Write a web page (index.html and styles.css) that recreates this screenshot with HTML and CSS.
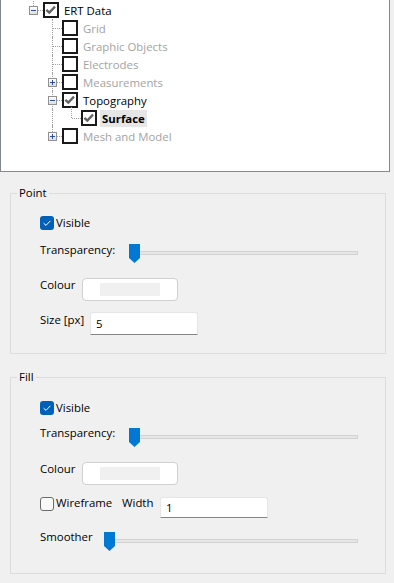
FILE: index.html
```html
<!DOCTYPE html>
<html lang="en">
<head>
    <meta charset="UTF-8">
    <meta name="viewport" content="width=device-width, initial-scale=1.0">
    <title>Surface properties</title>
    <link rel="stylesheet" href="styles.css">
</head>
<body>
    <!-- Layer tree -->
    <div class="tree">
        <div class="row">
            <span class="ind top h"><span class="exp"></span></span>
            <span class="tcb"><svg viewBox="0 0 12 12"><path d="M1.4 5.8 L4.3 8.6 L10 2.6"/></svg></span>
            <span class="tlabel">ERT Data</span>
        </div>
        <div class="row">
            <span class="ind"></span>
            <span class="ind v h"></span>
            <span class="tcb"></span>
            <span class="tlabel dis">Grid</span>
        </div>
        <div class="row">
            <span class="ind"></span>
            <span class="ind v h"></span>
            <span class="tcb"></span>
            <span class="tlabel dis">Graphic Objects</span>
        </div>
        <div class="row">
            <span class="ind"></span>
            <span class="ind v h"></span>
            <span class="tcb"></span>
            <span class="tlabel dis">Electrodes</span>
        </div>
        <div class="row">
            <span class="ind"></span>
            <span class="ind v h"><span class="exp plus"></span></span>
            <span class="tcb"></span>
            <span class="tlabel dis">Measurements</span>
        </div>
        <div class="row">
            <span class="ind"></span>
            <span class="ind v h"><span class="exp"></span></span>
            <span class="tcb"><svg viewBox="0 0 12 12"><path d="M1.4 5.8 L4.3 8.6 L10 2.6"/></svg></span>
            <span class="tlabel">Topography</span>
        </div>
        <div class="row">
            <span class="ind"></span>
            <span class="ind v"></span>
            <span class="ind top h"></span>
            <span class="tcb"><svg viewBox="0 0 12 12"><path d="M1.4 5.8 L4.3 8.6 L10 2.6"/></svg></span>
            <span class="tlabel sel">Surface</span>
        </div>
        <div class="row">
            <span class="ind"></span>
            <span class="ind top h"><span class="exp plus"></span></span>
            <span class="tcb"></span>
            <span class="tlabel dis">Mesh and Model</span>
        </div>
    </div>

    <!-- Point properties -->
    <fieldset class="group point">
        <legend>Point</legend>
        <div class="frow visible">
            <span class="cb on"><svg viewBox="0 0 14 14"><path d="M3.6 7.2 L6 9.4 L10.4 4.8"/></svg></span>
            <span class="cb-label">Visible</span>
        </div>
        <div class="frow trans">
            <span class="lbl w-trans">Transparency:</span>
            <div class="slider"><div class="track"></div><svg class="thumb" viewBox="0 0 11 19"><path d="M0 0H11V14L5.5 19L0 14Z"/></svg></div>
        </div>
        <div class="frow colour">
            <span class="lbl w-colour">Colour</span>
            <button class="colbtn"><span class="swatch"></span></button>
        </div>
        <div class="frow size">
            <span class="lbl w-size">Size [px]</span>
            <input class="num" type="text" value="5">
        </div>
    </fieldset>

    <!-- Fill properties -->
    <fieldset class="group fill">
        <legend>Fill</legend>
        <div class="frow visible">
            <span class="cb on"><svg viewBox="0 0 14 14"><path d="M3.6 7.2 L6 9.4 L10.4 4.8"/></svg></span>
            <span class="cb-label">Visible</span>
        </div>
        <div class="frow trans">
            <span class="lbl w-trans">Transparency:</span>
            <div class="slider"><div class="track"></div><svg class="thumb" viewBox="0 0 11 19"><path d="M0 0H11V14L5.5 19L0 14Z"/></svg></div>
        </div>
        <div class="frow colour">
            <span class="lbl w-colour">Colour</span>
            <button class="colbtn"><span class="swatch"></span></button>
        </div>
        <div class="frow wire">
            <span class="cb off"></span>
            <span class="lbl w-wire">Wireframe</span>
            <span class="lbl w-width">Width</span>
            <input class="num short" type="text" value="1">
        </div>
        <div class="frow smooth">
            <span class="lbl w-smooth">Smoother</span>
            <div class="slider"><div class="track"></div><svg class="thumb" viewBox="0 0 11 19"><path d="M0 0H11V14L5.5 19L0 14Z"/></svg></div>
        </div>
    </fieldset>
</body>
</html>
```

FILE: styles.css
```css
body {
    margin: 0;
    background: #f0f0f0;
    font-family: "Open Sans", "Noto Sans", sans-serif;
    font-size: 11.4px;
    color: #000;
}

/* ---- tree ---- */
.tree {
    box-sizing: border-box;
    width: 390px;
    height: 172px;
    background: #fff;
    border: 1px solid #828790;
    border-top: none;
    padding: 1px 0 0 23px;
}

.row {
    display: flex;
    align-items: center;
    height: 18px;
}

.ind {
    position: relative;
    flex: none;
    width: 19px;
    height: 18px;
}

.ind.v::before,
.ind.top::before {
    content: "";
    position: absolute;
    left: 9px;
    top: 0;
    bottom: 0;
    border-left: 1px dotted #a0a0a0;
}

.ind.top::before {
    top: -2px;
    bottom: 9px;
}

.ind.h::after {
    content: "";
    position: absolute;
    left: 10px;
    right: 0;
    top: 9px;
    border-top: 1px dotted #a0a0a0;
}

/* expand / collapse box */
.exp {
    position: absolute;
    left: 5px;
    top: 5px;
    z-index: 1;
    box-sizing: border-box;
    width: 9px;
    height: 9px;
    border: 1px solid #919191;
    background: linear-gradient(#fff, #dedede);
}

.exp::before {
    content: "";
    position: absolute;
    left: 1px;
    top: 3px;
    width: 5px;
    height: 1px;
    background: #2f4f9a;
}

.exp.plus::after {
    content: "";
    position: absolute;
    left: 3px;
    top: 1px;
    width: 1px;
    height: 5px;
    background: #2f4f9a;
}

.tcb {
    flex: none;
    box-sizing: border-box;
    width: 16px;
    height: 16px;
    border: 2px solid #1a1a1a;
    background: #fff;
}

.tcb svg {
    display: block;
    width: 12px;
    height: 12px;
}

.tcb path {
    fill: none;
    stroke: #646464;
    stroke-width: 2.3;
}

.tlabel {
    margin-left: 3px;
    padding: 0 2px;
    line-height: 17px;
    white-space: nowrap;
}

.tlabel.dis {
    color: #a3a3a3;
}

.tlabel.sel {
    background: #e6e6e6;
    font-weight: bold;
}

/* ---- group boxes ---- */
.group {
    box-sizing: border-box;
    width: 376px;
    margin: 13px 0 0 10px;
    padding: 0 27px 18px 29px;
    border: 1px solid #dcdcdc;
    min-width: 0;
}

.group.fill {
    margin-top: 15px;
    padding-bottom: 22px;
}

.group legend {
    margin-left: -23px;
    padding: 0 2px;
    line-height: 16px;
}

.frow {
    display: flex;
    align-items: flex-start;
}

.lbl,
.cb-label {
    flex: none;
    line-height: 16px;
    white-space: nowrap;
}

.frow.visible {
    align-items: center;
    height: 14px;
    margin-top: 15px;
}

.fill .frow.visible {
    margin-top: 16px;
}

.frow.trans {
    margin-top: 12px;
}

.fill .frow.trans {
    margin-top: 10px;
}

.frow.colour {
    margin-top: 14px;
}

.frow.size {
    margin-top: 11px;
}

.frow.wire {
    margin-top: 10px;
}

.frow.smooth {
    margin-top: 11px;
}

.cb-label {
    margin-left: 2px;
}

.cb {
    flex: none;
    box-sizing: border-box;
    width: 14px;
    height: 14px;
    border-radius: 3px;
}

.cb.on {
    background: #005fb8;
}

.cb.on svg {
    display: block;
    width: 14px;
    height: 14px;
}

.cb.on path {
    fill: none;
    stroke: #fff;
    stroke-width: 1;
}

.cb.off {
    margin-top: 2px;
    border: 1px solid #6b6b6b;
    background: #f9f9f9;
}

.w-trans { width: 89px; }
.w-smooth { width: 64px; }
.w-colour { width: 42px; }
.w-size { width: 50px; }
.w-wire { width: 66px; margin-left: 2px; }
.w-width { width: 38px; }

/* ---- slider ---- */
.slider {
    position: relative;
    flex: 1;
    height: 19px;
    margin-top: 2px;
}

.fill .slider {
    margin-top: 3px;
}

.track {
    box-sizing: border-box;
    height: 4px;
    margin: 7px 0 0 1px;
    background: #e6e6e6;
    border: 1px solid #d2d2d2;
}

.thumb {
    position: absolute;
    left: 0;
    top: 0;
    width: 11px;
    height: 19px;
}

.thumb path {
    fill: #0078d4;
}

/* ---- colour button & inputs ---- */
.colbtn {
    display: flex;
    align-items: center;
    justify-content: center;
    box-sizing: border-box;
    width: 96px;
    height: 23px;
    margin-top: 1px;
    padding: 0;
    background: #fff;
    border: 1px solid #d0d0d0;
    border-radius: 4px;
}

.swatch {
    width: 60px;
    height: 13px;
    background: #f0f0f0;
}

.num {
    box-sizing: border-box;
    width: 108px;
    height: 23px;
    margin: 0;
    padding: 0 0 0 5px;
    font: inherit;
    color: #000;
    background: #fff;
    border: 1px solid #e6e6e6;
    border-bottom-color: #868686;
    border-radius: 3px 3px 0 0;
    outline: none;
}

.num.short {
    height: 21px;
    margin-top: 2px;
}
```
